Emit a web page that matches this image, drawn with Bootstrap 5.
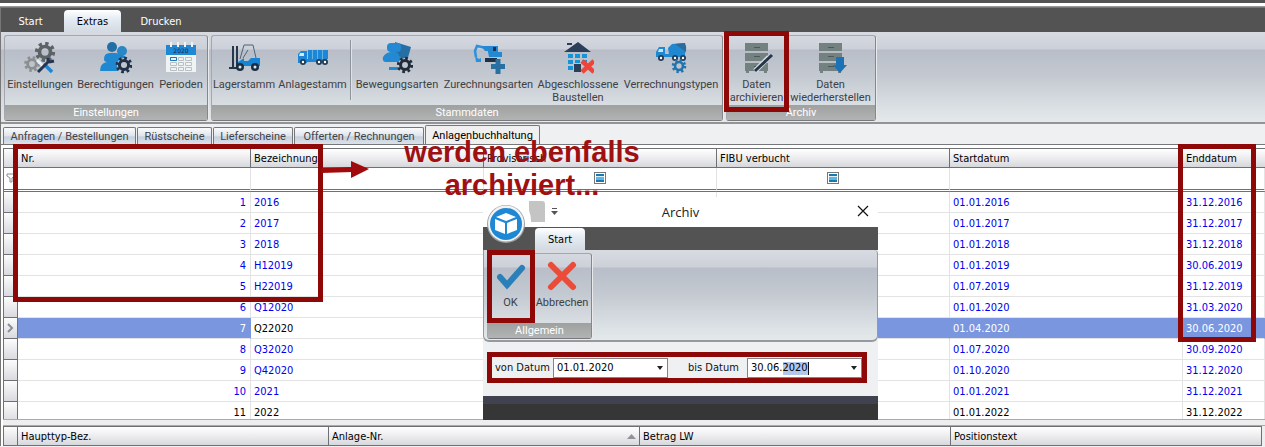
<!DOCTYPE html>
<html lang="de">
<head>
<meta charset="utf-8">
<meta name="viewport" content="width=device-width, initial-scale=1">
<title>Anlagenbuchhaltung</title>
<link href="https://cdn.jsdelivr.net/npm/bootstrap@5.3.0/dist/css/bootstrap.min.css" rel="stylesheet">
<style>
:root{--red:#8f0808;--chrome:#535353;--edge:#6f7074}
body{font:11px/13px "DejaVu Sans Condensed","DejaVu Sans",sans-serif;background:#eff0f2;color:#111;overflow-x:hidden}
button{font:inherit;color:inherit}
.ribbon,.subtabs{font-family:Roboto,"Liberation Sans",sans-serif}
.topline{height:8px;background:linear-gradient(var(--chrome) 3px,#fff 3px 6px,#999 6px 7px,#777 7px)}
.frame{border-left:1px solid #777}
.strip{background:var(--chrome);height:24px;padding-top:2px}
.strip .rtab{border:0;background:none;color:#fff;height:22px;padding:0;text-align:center}
.strip .rtab.active{background:linear-gradient(#fff,#e6ecf3 40%,#d3dae2);color:#000;border-radius:4px 4px 0 0}
.main-strip .rtab{width:57px}
.main-strip .rtab:first-child{width:63px;padding-right:4px}
.main-strip .rtab:last-child{width:80px}
.ribbon{height:92px;padding:3px;gap:3px;border-bottom:2px solid #929498;background:linear-gradient(#d8dbe2,#ccd0d8 17px,#b8bdc8 18px,#c4cad1 45px,#dde3e6 80px,#e4e8e9)}
.rgroup{border:1px solid #a4a8ae;border-right-color:#85878b;border-bottom-color:#77797c;border-radius:3px;height:86px;box-shadow:1px 1px 0 #e8eaec}
.rgroup .cap{height:15px;line-height:16px;background:linear-gradient(#9fa1a1,#b2b4b3);color:#fff;text-align:center}
.rbtn{border:0;background:none;padding:6px 0 0;color:#3d4045;text-align:center;white-space:nowrap}
.rbtn svg{display:block;margin:0 auto 4px;width:32px;height:32px}
.b-set{width:70px}.b-perm{width:81px}.b-per{width:50px;margin-right:1px}
.b-lag{width:64px}.b-anl{width:73px}.b-bew{width:88px}.b-zur{width:95px}.b-abg{width:84px}.b-ver{width:102px}
.b-arch{width:59px}.b-rest{width:89px}
.b-ok{width:45px}.b-ab{width:58px}
.vsep{width:2px;height:60px;margin:4px 1px 0;border-left:1px solid #8e949c;border-right:1px solid #dfe3e8}
.subtabs{height:21px;padding:3px 0 0 2px;gap:1px;border-bottom:1px solid #77787b;background:#eff0f2}
.subtabs button{border:1px solid #747679;border-bottom:0;height:17px;padding:0;border-radius:2px 2px 0 0;background:linear-gradient(#fafbfc,#dfe4eb 50%,#c5cfdd 55%,#dbe1e9);color:#40444a}
.subtabs button.active{background:#f0f0f0;color:#000;height:19px;margin-top:-2px}
.s1{width:133px}.s2{width:75px}.s3{width:80px}.s4{width:130px}.s5{width:115px}
.gridbox{padding:3px 0 0 2px;background:#fff}
.grid{table-layout:fixed;width:100%;border-collapse:separate;border-spacing:0;background:#fff;margin:0}
.grid th,.grid td{height:21px;padding:0 3px;border-right:1px solid #e3e3e3;border-bottom:1px solid #e3e3e3;color:#0000f0;white-space:nowrap;overflow:hidden}
.grid thead th{height:20px;border-top:1px solid var(--edge);border-right:1px solid var(--edge);border-bottom:1px solid var(--edge);font-weight:400;color:#000;background:linear-gradient(#fff,#e9e9ec 60%,#d6d7db)}
.grid th:first-child{border-left:1px solid var(--edge);border-right:1px solid var(--edge);border-bottom:1px solid var(--edge);background:linear-gradient(#fcfcfc,#d9dadf);padding:0;text-align:center}
.mainrows .grid th:last-child:not(:first-child){border-right:0}
.grid .filter td,.grid .filter th{height:24px;border-bottom:3px double var(--edge);padding-bottom:2px;text-align:center}
.grid .filter th:first-child{background:#fff}
.grid th svg{display:block;margin:auto}
.grid td.num{text-align:right;padding-right:4px}
.grid .sel td{background:#7a96df;border-right-color:#7a96df;color:#fff}
.grid .sel td.cur{background:#fff;color:#000}
.grid .dark td{color:#000}
.c0{width:15px}.c1,.c2,.c3,.c4,.c5{width:233px}
.d1,.d2,.d3{width:311px}
.mainrows{height:271px;overflow:hidden}
.detail{background:#eee;padding-right:3px}
.tri{appearance:none;display:block;margin:0 auto;width:12px;height:12px;border:1px solid #777;background:linear-gradient(#1779b0 2px,#d9f2ff 2px 3px,#63b3df 3px 6px,#1779b0 6px) 50%/8px 8px no-repeat #fff}
.splitter{height:7px;background:#eee;border-top:1px solid #aaa;border-bottom:1px solid #aaa}
.markbox{position:absolute;border:5px solid var(--red);pointer-events:none;z-index:5}
.m-cols{left:13px;top:144px;width:310px;height:158px}
.m-end{left:1178px;top:144px;width:78px;height:198px}
.m-btn{left:724px;top:31px;width:65px;height:81px}
.note{position:absolute;left:396px;top:136px;width:252px;text-align:center;font:bold 29px/33px "Liberation Sans",Arial,sans-serif;color:#a00f12;z-index:4}
.arrow{position:absolute;left:321px;top:160px;z-index:5}
.dlg{position:absolute;left:483px;top:197px;width:395px;z-index:6;background:#eff0f2}
.dlg-title{height:30px;background:#fff;font:13px/30px "Open Sans",sans-serif;text-align:center;color:#222}
.dlg .strip{height:23px;padding:1px 0 0 52px}
.dlg .rtab{width:50px}
.dlg .ribbon{border:1px solid #96999d;border-width:0 1px 2px 1px;border-radius:0 4px 6px 6px}
.dlg .rgroup{width:105px;position:relative}
.dlg-x{position:absolute;right:9px;top:8px;border:0;background:none;padding:0;line-height:0}
.orb{position:absolute;left:2px;top:1px}
.qat{position:absolute;left:46px;top:4px}
.m-ok{left:-1px;top:-4px;width:48px;height:73px}
.dates{margin:10px 11px 13px 4px;border:5px solid var(--red);height:31px;padding:0 0 0 3px}
.dates label{color:#111;width:58px}
.dates .vonbox{margin-right:20px}
.dates .vonbox + label{width:59px}
.dbox{position:relative;width:115px}
.dbox input{width:100%;height:20px;border:1px solid #838488;border-radius:0;padding:0 3px;font:inherit;background:#fff;display:block}
.dbox .hl{background:linear-gradient(#b3c6ec,#b3c6ec) 35px 3px/25px 13px no-repeat,linear-gradient(#111,#111) 60px 3px/1px 13px no-repeat,#fff}
.dbox button{position:absolute;right:1px;top:1px;width:14px;height:18px;border:0;padding:0;background:#fff;line-height:0}
.dlg-foot{height:24px;background:linear-gradient(#40434f 8px,#363636 8px)}
</style>
</head>
<body>
<svg width="0" height="0" class="position-absolute" aria-hidden="true">
<defs>
<g id="gear"><circle r="6" fill="none" stroke="currentColor" stroke-width="4"/><circle r="9" fill="none" stroke="currentColor" stroke-width="4" stroke-dasharray="3.53 3.53"/></g>
<g id="cabinet"><path fill="#738280" d="M4 1h23v8H4zM4 11h23v8H4zM4 21h23v8H4zM5 29h3v2H5zM23 29h3v2h-3z"/><path stroke="#4c5958" stroke-width="1" d="M13 5.500h6M13 14.500h6M13 24.500h6"/><path stroke="#b5bcbd" d="M4 10h23M4 20h23"/></g>
</defs>
</svg>
<div class="topline"></div>
<div class="frame">
<nav class="strip main-strip d-flex" aria-label="Menüband">
<button class="rtab">Start</button><button class="rtab active">Extras</button><button class="rtab">Drucken</button>
</nav>
<div class="ribbon d-flex">
<section class="rgroup d-flex flex-column justify-content-between">
<div class="d-flex align-items-start">
<button class="rbtn b-set"><svg viewBox="0 0 32 32"><g color="#5c6265"><use href="#gear" transform="translate(21 10) scale(.92)"/></g><g color="#8b8f92"><use href="#gear" transform="translate(8 22) scale(.72)"/></g><path d="M13 18l6 6" stroke="#e8edf0" stroke-width="3"/><path d="M20 22l8 8" stroke="#1c86d3" stroke-width="3.500"/><path d="M14 30l11-11M24 20v-4M25 20l5-1" stroke="#263650" stroke-width="3"/></svg>Einstellungen</button>
<button class="rbtn b-perm"><svg viewBox="0 0 32 32"><circle cx="22" cy="9" r="5" fill="#2b86c4"/><path fill="#2480c2" d="M15 18q1-5 6-5 6 0 6 6z"/><circle cx="12" cy="5" r="5" fill="#236fa5"/><path fill="#2088d0" d="M4 17q0-6 6-6h5q5 0 6 5l-3 13H0q0-8 7-9-3 0-3-3z"/><circle cx="24" cy="23" r="7" fill="#c0c6ce"/><g color="#20324a"><use href="#gear" transform="translate(24 23) scale(.76)"/></g></svg>Berechtigungen</button>
<button class="rbtn b-per"><svg viewBox="0 0 32 32"><path fill="#f0f3f4" d="M1 3h30v27H1z"/><path fill="#1f88d4" d="M1 3h30v10H1z"/><path stroke="#eef4f8" stroke-width="2" d="M6 0v5M13 0v5M20 0v5M27 0v5"/><text x="16" y="11" font-size="6" text-anchor="middle" fill="#12283c" font-family="DejaVu Sans">2020</text><path fill="none" stroke="#b9c0c4" d="M5.500 15.500h6v3h-6zM13.500 15.500h5v3h-5zM20.500 15.500h6v3h-6zM5.500 20.500h6v3h-6zM13.500 20.500h5v3h-5zM20.500 20.500h6v3h-6zM5.500 25.500h6v3h-6zM13.500 25.500h5v3h-5zM20.500 25.500h6v3h-6z"/><path fill="none" stroke="#1978bd" d="M5.500 15.500h6v3h-6z"/></svg>Perioden</button>
</div><div class="cap">Einstellungen</div></section>
<section class="rgroup d-flex flex-column justify-content-between">
<div class="d-flex align-items-start">
<button class="rbtn b-lag"><svg viewBox="0 0 32 32"><path fill="none" stroke="#26364c" stroke-width="2" d="M9 4v22M5 4v21M1 26h8"/><path fill="none" stroke="#4d6578" d="M12 17L16 3h9l3 13M15 16l5-8"/><path fill="#1684d5" d="M10 20l6-4v3h4l3-3h9v8H10z"/><circle cx="12" cy="25" r="4" fill="#1c2d42"/><circle cx="27" cy="25" r="4" fill="#1c2d42"/><circle cx="12" cy="25" r="1.500" fill="#dce6ee"/><circle cx="27" cy="25" r="1.500" fill="#dce6ee"/></svg>Lagerstamm</button>
<button class="rbtn b-anl"><svg viewBox="0 0 32 32"><path fill="#1c87d6" d="M1 12l3-3h6v12H1zM11 8h20v9H11zM10 17h20v3H10z"/><path fill="#d4eafa" d="M3 11h4v3H2z"/><path stroke="#67b2e5" d="M15.500 8v9M20.500 8v9M25.500 8v9"/><g fill="#203c55"><circle cx="6" cy="20" r="3"/><circle cx="22" cy="20" r="3"/><circle cx="28" cy="20" r="3"/></g><g fill="#fff"><circle cx="6" cy="20" r="1.200"/><circle cx="22" cy="20" r="1.200"/><circle cx="28" cy="20" r="1.200"/></g></svg>Anlagestamm</button>
<div class="vsep"></div>
<button class="rbtn b-bew"><svg viewBox="0 0 32 32"><path fill="#256fa4" d="M14 0l16 5-4 14H13z"/><rect x="6" y="1" width="14" height="9" rx="4" fill="#2389d2"/><path fill="#2389d2" d="M2 15q3-5 9-5 6-1 7 4l6 4-6 2H4q-3-1-2-5zM8 25h10v3H8z"/><circle cx="24" cy="23" r="7" fill="#c0c6ce"/><g color="#202c3b"><use href="#gear" transform="translate(24 23) scale(.74)"/></g></svg>Bewegungsarten</button>
<button class="rbtn b-zur"><svg viewBox="0 0 32 32"><path fill="none" stroke="#2a91dd" stroke-width="2.500" d="M13 6L4 4 2 9l1 6"/><path fill="#2a91dd" d="M2 14l4 3 2-1v4H3z"/><path fill="#2389d2" d="M8 4h10v5h-6zM14 5l4-1h7v6h4v5H16z"/><path fill="#1d3148" d="M20 5h3v4h-3zM12 16h12v4H12z"/><path stroke="#2870a1" stroke-width="5" d="M25 17v15M18 24.500h14"/></svg>Zurechnungsarten</button>
<button class="rbtn b-abg"><svg viewBox="0 0 32 32"><path fill="#2b4058" d="M2 10L16 0l13 10zM5 1h5v2H5zM12 22h7v8h-7z"/><path fill="#1594d8" d="M6 12h5v4H6zM13 12h5v4h-5zM20 12h5v4h-5zM6 18h5v4H6zM13 18h5v3h-5zM20 18h5v4h-5zM6 24h5v4H6z"/><path stroke="#ef4438" stroke-width="4.500" d="M20 19l12 11M32 19L20 30"/></svg>Abgeschlossene<br>Baustellen</button>
<button class="rbtn b-ver"><svg viewBox="0 0 32 32"><path fill="#1f88d1" d="M1 10l3-5h6v10H1zM10 12h20v3H10zM13 6l4-4 12-1q3 5 1 11H14z"/><path fill="#2c6c9d" d="M20 2l10-1q2 4 1 9z"/><path fill="#c5e6fa" d="M4 7h4v3H3z"/><g fill="#233c55"><circle cx="6" cy="16" r="3"/><circle cx="20" cy="16" r="3"/><circle cx="28" cy="16" r="3"/></g><g fill="#fff"><circle cx="6" cy="16" r="1.200"/><circle cx="20" cy="16" r="1.200"/><circle cx="28" cy="16" r="1.200"/></g><g color="#2373ac"><use href="#gear" transform="translate(24 24) scale(.66)"/></g></svg>Verrechnungstypen</button>
</div><div class="cap">Stammdaten</div></section>
<section class="rgroup d-flex flex-column justify-content-between">
<div class="d-flex align-items-start">
<button class="rbtn b-arch"><svg viewBox="0 0 32 32"><use href="#cabinet"/><path stroke="#dce1e4" stroke-width="5" d="M14 29l14-14"/><path stroke="#25364c" stroke-width="3" d="M14 29l17-16"/></svg>Daten<br>archivieren</button>
<button class="rbtn b-rest"><svg viewBox="0 0 32 32"><use href="#cabinet"/><path fill="#1b72b4" d="M21 15h8v8h3l-7 8-7-8h3z"/></svg>Daten<br>wiederherstellen</button>
</div><div class="cap">Archiv</div></section>
</div>
<nav class="subtabs d-flex" aria-label="Register">
<button class="s1">Anfragen / Bestellungen</button><button class="s2">Rüstscheine</button><button class="s3">Lieferscheine</button><button class="s4">Offerten / Rechnungen</button><button class="s5 active">Anlagenbuchhaltung</button>
</nav>
<main class="gridbox">
<div class="mainrows">
<table class="grid">
<colgroup><col class="c0"><col class="c1"><col class="c2"><col class="c3"><col class="c4"><col class="c5"><col></colgroup>
<thead><tr><th></th><th>Nr.</th><th>Bezeichnung</th><th>Provisorisch</th><th>FIBU verbucht</th><th>Startdatum</th><th>Enddatum</th></tr></thead>
<tbody>
<tr class="filter"><th><svg width="9" height="10" viewBox="0 0 9 10"><path d="M1 1h7v2L6 5v4H4V5L1 3z" fill="none" stroke="#888b92"/></svg></th><td></td><td></td><td><input class="tri" type="checkbox" aria-label="Provisorisch"></td><td><input class="tri" type="checkbox" aria-label="FIBU verbucht"></td><td></td><td></td></tr>
<tr><th></th><td class="num">1</td><td>2016</td><td></td><td></td><td>01.01.2016</td><td>31.12.2016</td></tr>
<tr><th></th><td class="num">2</td><td>2017</td><td></td><td></td><td>01.01.2017</td><td>31.12.2017</td></tr>
<tr><th></th><td class="num">3</td><td>2018</td><td></td><td></td><td>01.01.2018</td><td>31.12.2018</td></tr>
<tr><th></th><td class="num">4</td><td>H12019</td><td></td><td></td><td>01.01.2019</td><td>30.06.2019</td></tr>
<tr><th></th><td class="num">5</td><td>H22019</td><td></td><td></td><td>01.07.2019</td><td>31.12.2019</td></tr>
<tr><th></th><td class="num">6</td><td>Q12020</td><td></td><td></td><td>01.01.2020</td><td>31.03.2020</td></tr>
<tr class="sel"><th><svg width="7" height="10" viewBox="0 0 7 10"><path d="M1 1l4 4-4 4" fill="none" stroke="#8b8f98" stroke-width="2"/></svg></th><td class="num">7</td><td class="cur">Q22020</td><td></td><td></td><td>01.04.2020</td><td>30.06.2020</td></tr>
<tr><th></th><td class="num">8</td><td>Q32020</td><td></td><td></td><td>01.07.2020</td><td>30.09.2020</td></tr>
<tr><th></th><td class="num">9</td><td>Q42020</td><td></td><td></td><td>01.10.2020</td><td>31.12.2020</td></tr>
<tr><th></th><td class="num">10</td><td>2021</td><td></td><td></td><td>01.01.2021</td><td>31.12.2021</td></tr>
<tr class="dark"><th></th><td class="num">11</td><td>2022</td><td></td><td></td><td>01.01.2022</td><td>31.12.2022</td></tr>
</tbody></table>
</div>
<div class="splitter"></div>
<div class="detail">
<table class="grid">
<colgroup><col class="c0"><col class="d1"><col class="d2"><col class="d3"><col></colgroup>
<thead><tr><th></th><th>Haupttyp-Bez.</th><th><span class="d-flex justify-content-between align-items-center">Anlage-Nr.<svg width="9" height="5" viewBox="0 0 9 5" class="m-0"><path d="M0 5l4.500-5L9 5z" fill="#8f9399"/></svg></span></th><th>Betrag LW</th><th>Positionstext</th></tr></thead>
</table>
</div>
</main>
</div>
<div class="markbox m-btn"></div><div class="markbox m-cols"></div><div class="markbox m-end"></div>
<svg class="arrow" width="49" height="20" viewBox="0 0 49 20"><path d="M0 10.500L32 9.500" stroke="#a00a0c" stroke-width="5"/><path d="M30 1l18 8-18 9z" fill="#a00a0c"/></svg>
<div class="note">werden ebenfalls archiviert...</div>
<div class="dlg" role="dialog" aria-label="Archiv">
<div class="dlg-title">Archiv</div>
<button class="dlg-x" aria-label="Schließen"><svg width="12" height="12" viewBox="0 0 12 12"><path d="M1 1l10 10M11 1L1 11" stroke="#111" stroke-width="1.200"/></svg></button>
<svg class="qat" width="32" height="24" viewBox="0 0 32 24"><path d="M-9 0h22q3 0 3 3v18H2Q2 5-9 0z" fill="#c4c4c4"/><path d="M23 7.500h5" stroke="#555"/><path d="M22 10h7l-3.500 4z" fill="#555"/></svg>
<div class="strip d-flex"><button class="rtab active">Start</button></div>
<div class="ribbon d-flex">
<section class="rgroup d-flex flex-column justify-content-between">
<div class="d-flex align-items-start">
<button class="rbtn b-ok"><svg viewBox="0 0 32 32"><path d="M5 17l7 8L27 8" fill="none" stroke="#2a80b9" stroke-width="6" stroke-linecap="round"/></svg>OK</button>
<button class="rbtn b-ab"><svg viewBox="0 0 32 32"><path d="M5 5l22 22M27 5L5 27" stroke="#eb4c3a" stroke-width="6" stroke-linecap="round"/></svg>Abbrechen</button>
</div><div class="cap">Allgemein</div><div class="markbox m-ok"></div></section>
</div>
<svg class="orb" width="42" height="46" viewBox="0 0 42 46"><circle cx="21" cy="26" r="19" fill="#9a9da1"/><circle cx="21" cy="25.500" r="18" fill="#f1f3f5"/><circle cx="21" cy="26" r="16" fill="#1f88d4"/><path fill="#fff" d="M21 15l10 4-10 4-10-4zM10 21l10 4v11l-10-4zM32 21l-10 4v11l10-4z"/></svg>
<div class="dates d-flex align-items-center">
<label for="von">von Datum</label>
<div class="dbox vonbox"><input id="von" type="text" value="01.01.2020"><button aria-label="Datum wählen"><svg width="6" height="4"><path d="M0 0h6L3 4z" fill="#222"/></svg></button></div>
<label for="bis">bis Datum</label>
<div class="dbox"><input id="bis" class="hl" type="text" value="30.06.2020"><button aria-label="Datum wählen"><svg width="6" height="4"><path d="M0 0h6L3 4z" fill="#222"/></svg></button></div>
</div>
<div class="dlg-foot"></div>
</div>
<script src="https://cdn.jsdelivr.net/npm/bootstrap@5.3.0/dist/js/bootstrap.bundle.min.js"></script>
</body>
</html>
